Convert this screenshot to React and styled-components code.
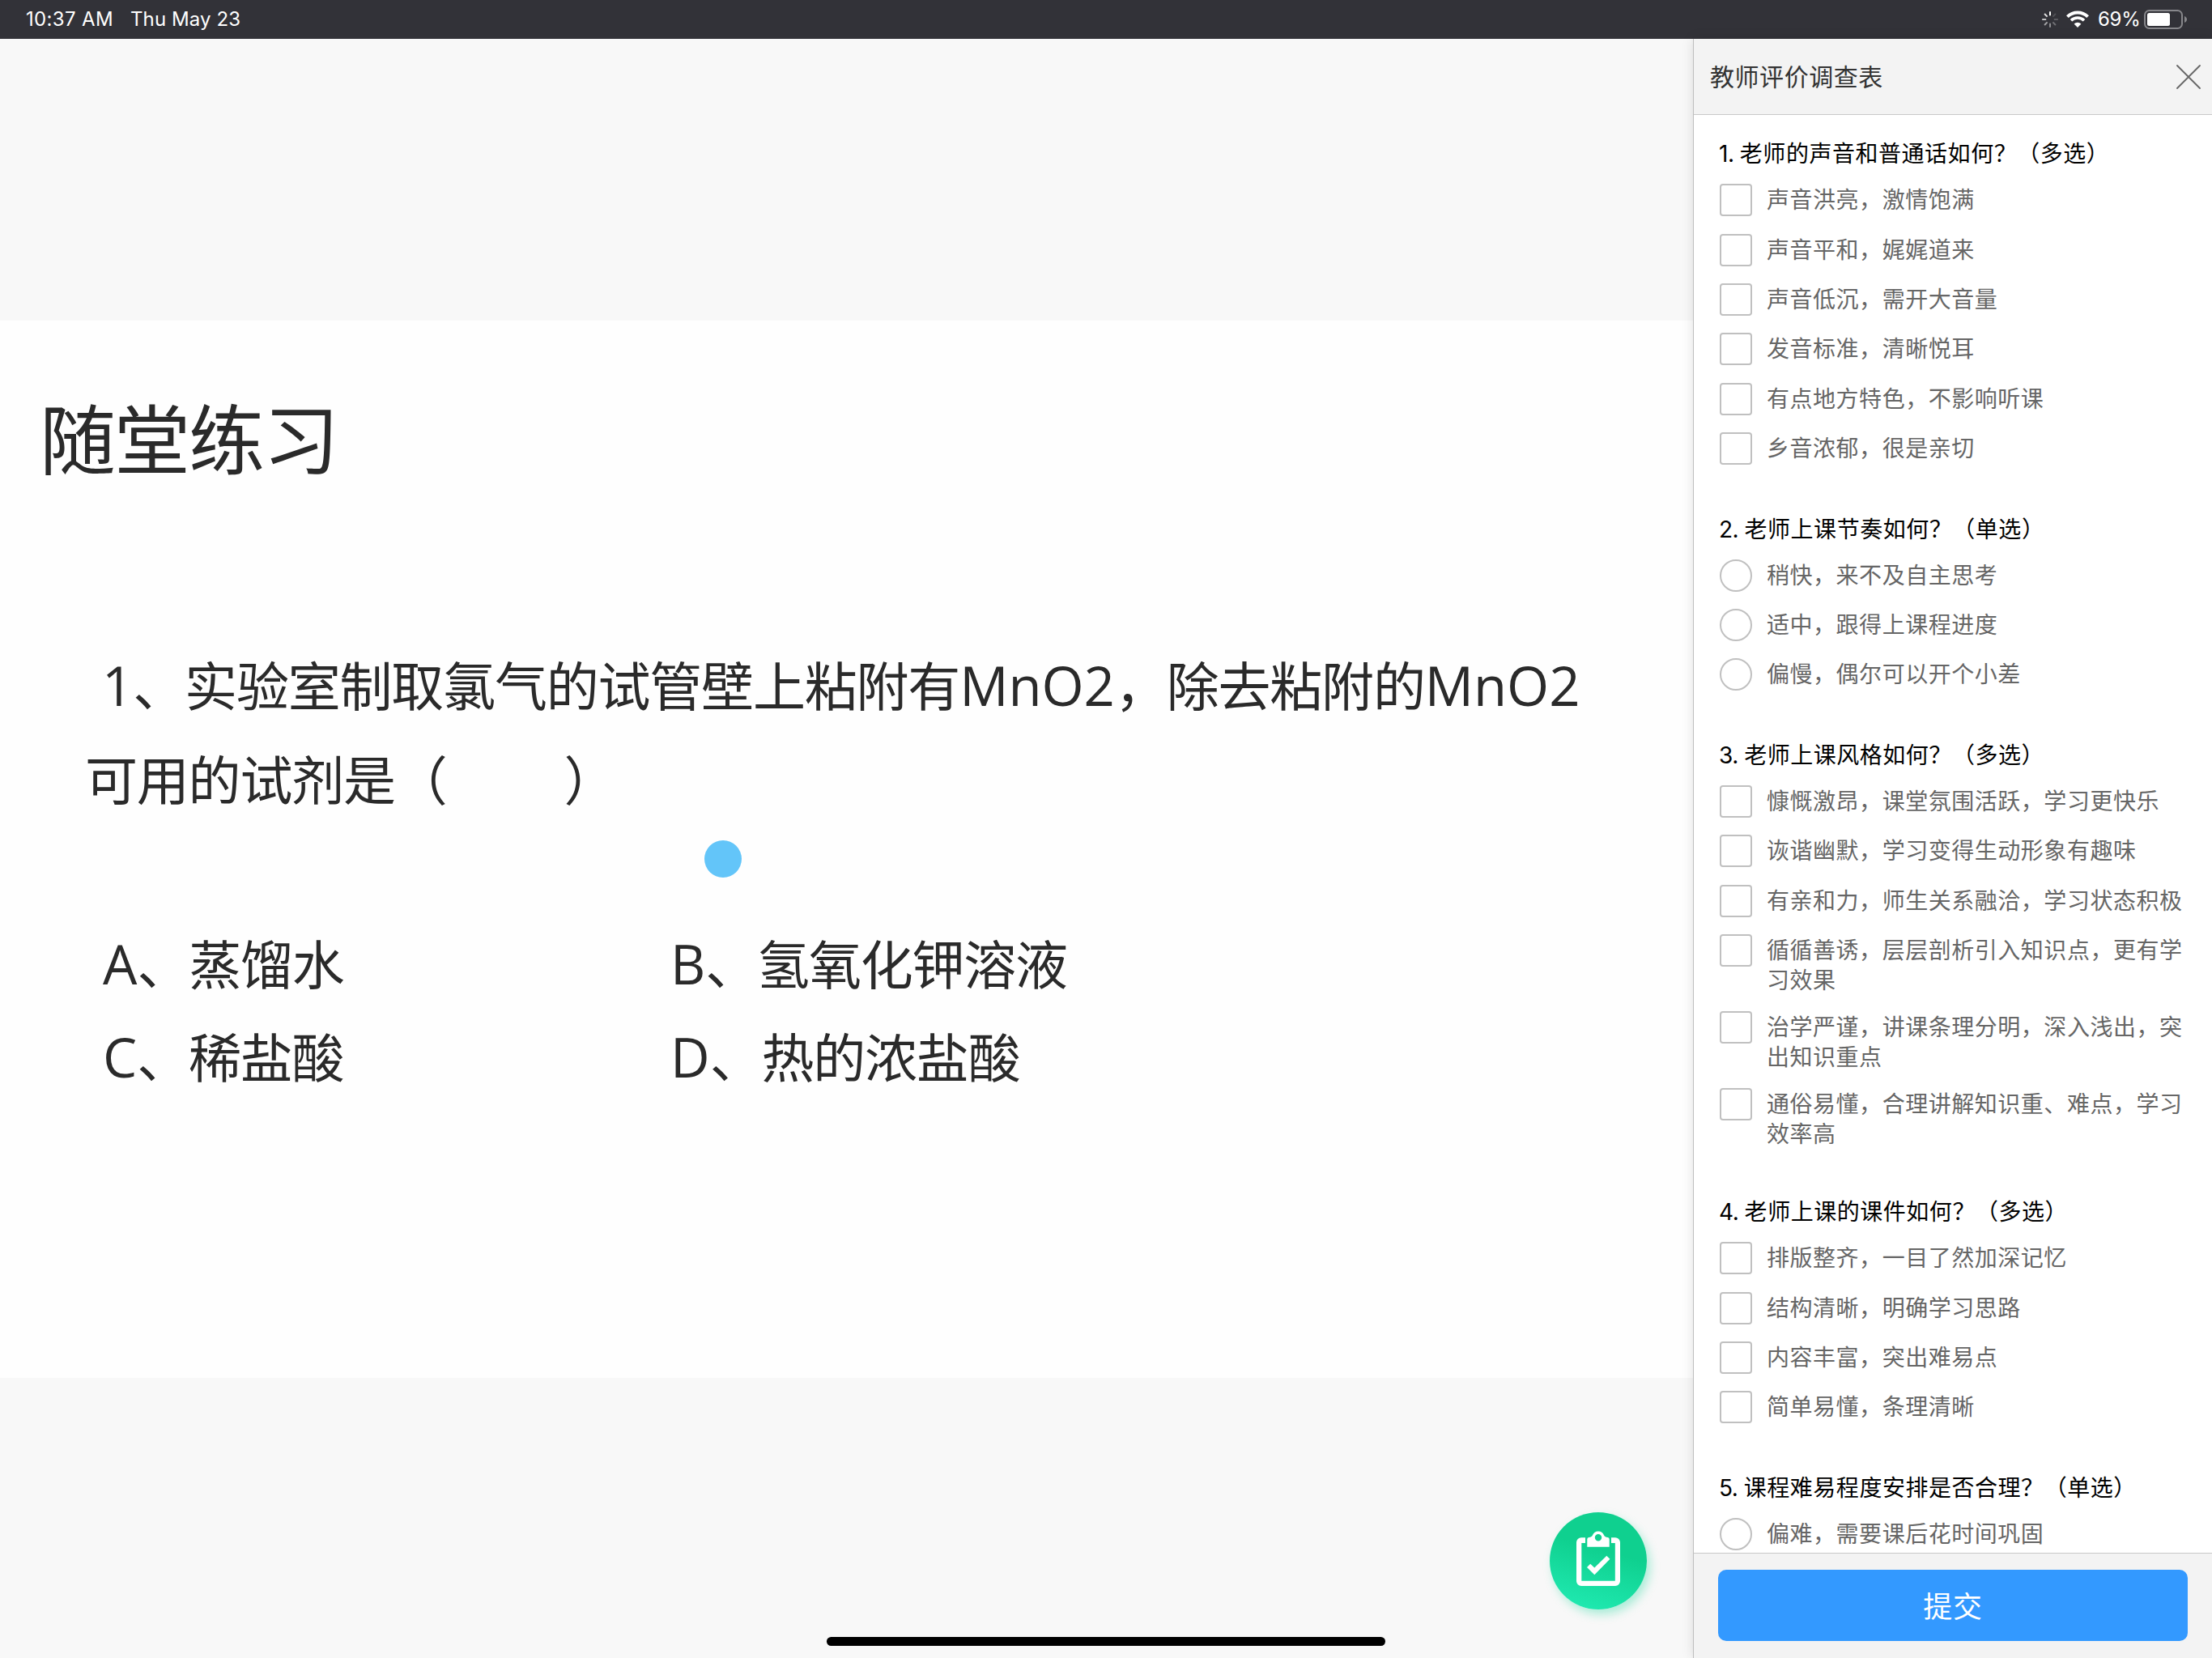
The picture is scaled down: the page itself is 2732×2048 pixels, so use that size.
import React, { useState } from 'react'
import styled, { createGlobalStyle } from 'styled-components';


const GlobalStyle = createGlobalStyle`
    html, body, #root {
        height: 100%;
        margin: 0;
    }
    body {
        overflow: hidden;
        font-family: 'Inter', 'Noto Sans CJK SC', sans-serif;
        text-spacing-trim: space-all;
    }
    * {
        box-sizing: border-box;
    }
`;

const questions = [
    {
        title: '老师的声音和普通话如何？（多选）',
        multiple: true,
        answers: ['声音洪亮，激情饱满', '声音平和，娓娓道来', '声音低沉，需开大音量', '发音标准，清晰悦耳', '有点地方特色，不影响听课', '乡音浓郁，很是亲切'],
    },
    {
        title: '老师上课节奏如何？（单选）',
        multiple: false,
        answers: ['稍快，来不及自主思考', '适中，跟得上课程进度', '偏慢，偶尔可以开个小差'],
    },
    {
        title: '老师上课风格如何？（多选）',
        multiple: true,
        answers: [
            '慷慨激昂，课堂氛围活跃，学习更快乐',
            '诙谐幽默，学习变得生动形象有趣味',
            '有亲和力，师生关系融洽，学习状态积极',
            '循循善诱，层层剖析引入知识点，更有学习效果',
            '治学严谨，讲课条理分明，深入浅出，突出知识重点',
            '通俗易懂，合理讲解知识重、难点，学习效率高',
        ],
    },
    {
        title: '老师上课的课件如何？（多选）',
        multiple: true,
        answers: ['排版整齐，一目了然加深记忆', '结构清晰，明确学习思路', '内容丰富，突出难易点', '简单易懂，条理清晰'],
    },
    {
        title: '课程难易程度安排是否合理？（单选）',
        multiple: false,
        answers: ['偏难，需要课后花时间巩固'],
    },
];

const choices = [
    { letter: 'A', text: '蒸馏水' },
    { letter: 'B', text: '氢氧化钾溶液' },
    { letter: 'C', text: '稀盐酸' },
    { letter: 'D', text: '热的浓盐酸' },
];

const Screen = styled.div`
    position: relative;
    display: flex;
    flex-direction: column;
    width: 2732px;
    height: 2048px;
    overflow: hidden;
`

const StatusBar = styled.header`
    flex: 0 0 48px;
    display: flex;
    align-items: center;
    padding: 0 30px 0 32px;
    background: #323238;
    color: #fff;
    font-size: 24px;
    line-height: 48px;
    letter-spacing: 0.1px;
`

const StatusText = styled.span`
    &:first-child{
        margin-right: 21px;
        letter-spacing: 0.35px;
    }
`

const StatusIcons = styled.div`
    display: flex;
    align-items: center;
    margin-left: auto;
`

const Percent = styled.span`
    width: 68px;
    padding-left: 11px;
    letter-spacing: -0.3px;
`

const Main = styled.main`
    flex: 1;
    display: flex;
    min-height: 0;
`

const Stage = styled.section`
    position: relative;
    flex: 1;
    display: flex;
    flex-direction: column;
    justify-content: center;
    background: #f8f8f8;
    padding-top: 2px;
`

const Slide = styled.article`
    position: relative;
    height: 1306px;
    padding: 75px 60px 0 105px;
    background: #fefefe;
    color: #2a2a2a;
    font-family: 'Noto Sans CJK SC', sans-serif;
    font-size: 65px;
    letter-spacing: -1.2px;
`

const SlideTitle = styled.h1`
    margin: 0 0 181px -56px;
    font-size: 94px;
    line-height: 134px;
    font-weight: 400;
    letter-spacing: -2px;
`

const Problem = styled.p`
    margin: 0;
    line-height: 116px;
    white-space: nowrap;
`

const Latin = styled.span`
    font-family: 'Open Sans', sans-serif;
    font-size: 67px;
    line-height: 0;
    letter-spacing: 0;
`

const Indent = styled.span`
    display: inline-block;
    width: 21px;
`

const Blank = styled.span`
    display: inline-block;
    width: 145px;
`

const Choices = styled.div`
    display: grid;
    grid-template-columns: 701px 1fr;
    margin-top: 113px;
    padding-left: 22px;
    line-height: 115px;
`

const Pointer = styled.div`
    position: absolute;
    left: 870px;
    top: 642px;
    width: 46px;
    height: 46px;
    border-radius: 50%;
    background: #63c5f9;
`

const SurveyButton = styled.button`
    position: absolute;
    right: 57px;
    bottom: 60px;
    width: 120px;
    height: 120px;
    padding: 0;
    border: 0;
    border-radius: 50%;
    background: linear-gradient(196deg, #0fd08f 40%, #1fe9b0 92%);
    box-shadow: 4px 6px 12px rgba(25, 215, 155, 0.35);
`

const Panel = styled.aside`
    position: relative;
    flex: 0 0 641px;
    display: flex;
    flex-direction: column;
    border-left: 1px solid #bebebe;
    background: #fff;
    box-shadow: 0 0 14px rgba(0, 0, 0, 0.12);
`

const PanelHeader = styled.div`
    flex: 0 0 94px;
    display: flex;
    align-items: center;
    justify-content: space-between;
    padding: 0 14px 0 20px;
    border-bottom: 1px solid #c8c8c8;
    background: #f3f3f3;
`

const PanelTitle = styled.span`
    padding-bottom: 3px;
    color: #333;
    font-size: 30px;
    letter-spacing: 0.55px;
`

const CloseButton = styled.button`
    display: flex;
    padding: 0;
    border: 0;
    background: none;
`

const PanelBody = styled.div`
    flex: 1;
    min-height: 0;
    overflow: hidden;
    padding: 27.4px 20px 0 32px;
    font-size: 28px;
    letter-spacing: 0.53px;
`

const Question = styled.section`
    margin-bottom: 57.3px;
`

const QuestionTitle = styled.h2`
    margin: 0 0 16px -1px;
    font-size: inherit;
    font-weight: 400;
    line-height: 42px;
    color: #000;
    white-space: nowrap;
`

const QuestionNumber = styled.span`
    letter-spacing: -0.5px;
`

const Answer = styled.label`
    display: flex;
    align-items: flex-start;
    min-height: 41.35px;
    margin-bottom: 20px;
    color: #666;
`

const Mark = styled.span`
    flex: 0 0 40px;
    height: 40px;
    margin-right: 18px;
    border: 2px solid ${({ $checked }) => $checked ? '#3399ff' : '#c0c0c0'};
    border-radius: ${({ $round }) => $round ? '50%' : '4px'};
    background: ${({ $checked }) => $checked ? '#3399ff' : '#fff'};
`

const AnswerText = styled.span`
    line-height: 37px;
    padding-top: 2px;
    margin-bottom: -1px;
`

const PanelFooter = styled.div`
    flex: 0 0 130px;
    padding: 20px 30px;
    border-top: 1px solid #c8c8c8;
    background: #f3f3f3;
`

const Submit = styled.button`
    width: 580px;
    height: 88px;
    padding: 0 0 3px;
    border: 0;
    border-radius: 10px;
    background: #3399ff;
    color: #fff;
    font-family: inherit;
    font-size: 36px;
    letter-spacing: 0.8px;
`

const HomeIndicator = styled.div`
    position: absolute;
    left: 1021px;
    bottom: 15px;
    width: 690px;
    height: 11px;
    border-radius: 6px;
    background: #000;
`

const Spinner = () => (
    <svg width="22" height="22" viewBox="-11 -11 22 22">
        {[1, 0.15, 0.2, 0.3, 0.45, 0.55, 0.7, 0.85].map((opacity, i) => (
            <path key={i} d="M0 -4.8V-9.8" transform={`rotate(${i * 45})`} stroke="#fff" strokeWidth="2" opacity={opacity} />
        ))}
    </svg>
)

const WifiIcon = styled.svg`
    margin-left: 9px;
`

const Wifi = () => (
    <WifiIcon width="28" height="22" viewBox="0 0 28 22" fill="none" stroke="#fff">
        <path d="M1.4 7.6A18 18 0 0 1 26.6 7.6" strokeWidth="4" />
        <path d="M6 12.2A11.5 11.5 0 0 1 22 12.2" strokeWidth="3.6" />
        <path d="M14 21L9.6 16.6A6.3 6.3 0 0 1 18.4 16.6Z" fill="#fff" stroke="none" />
    </WifiIcon>
)

const Battery = () => (
    <svg width="54" height="24" viewBox="0 0 54 24">
        <rect x="1" y="1" width="46" height="22" rx="5.5" fill="none" stroke="#87878b" strokeWidth="2" />
        <rect x="4" y="4" width="28" height="16" rx="2.5" fill="#fff" />
        <path d="M50 8C54 9.5 54 14.5 50 16Z" fill="#87878b" />
    </svg>
)

const Clipboard = () => (
    <svg width="120" height="120" viewBox="0 0 120 120" fill="#fff">
        <path d="M44 31.3H39a6 6 0 0 0-6 6V85a6 6 0 0 0 6 6H81a6 6 0 0 0 6-6V37.3a6 6 0 0 0-6-6H76V38H80.8V84.8H39.3V38H44Z" />
        <path fillRule="evenodd" d="M46.3 33.2Q46.3 31.2 48.3 30.9Q52.3 30.6 53 28.2A7.5 7.5 0 0 1 67 28.2Q67.7 30.6 71.7 30.9Q73.7 31.2 73.7 33.2V42.7H46.3ZM60 27a4.2 4.2 0 1 0 0 8.4a4.2 4.2 0 1 0 0-8.4Z" />
        <path d="M46 68L50.2 63.7L55.3 68.4L70.3 53.7L74.4 57.8L55.3 77.3Z" />
    </svg>
)

function App() {
    const [selected, setSelected] = useState({})

    const toggleAnswer = (question, index) => {
        const current = selected[question.title] || []
        const isOn = current.includes(index)
        let next = isOn ? current.filter(i => i !== index) : [...current, index]
        if (!question.multiple) {
            next = [index]
        }
        setSelected({ ...selected, [question.title]: next })
    }

    return (
        <>
            <GlobalStyle />
            <Screen lang="zh-CN">
                <StatusBar>
                    <StatusText>10:37 AM</StatusText>
                    <StatusText>Thu May 23</StatusText>
                    <StatusIcons>
                        <Spinner />
                        <Wifi />
                        <Percent>69%</Percent>
                        <Battery />
                    </StatusIcons>
                </StatusBar>
                <Main>
                    <Stage>
                        <Slide>
                            <SlideTitle>随堂练习</SlideTitle>
                            <Problem>
                                <Indent /><Latin>1</Latin>、实验室制取氯气的试管壁上粘附有<Latin>MnO2</Latin>，除去粘附的<Latin>MnO2</Latin>
                                <br />
                                可用的试剂是（<Blank />）
                            </Problem>
                            <Choices>
                                {choices.map(({ letter, text }) => (
                                    <div key={letter}><Latin>{letter}</Latin>、{text}</div>
                                ))}
                            </Choices>
                            <Pointer />
                        </Slide>
                        <SurveyButton><Clipboard /></SurveyButton>
                    </Stage>
                    <Panel>
                        <PanelHeader>
                            <PanelTitle>教师评价调查表</PanelTitle>
                            <CloseButton>
                                <svg width="30" height="30" viewBox="0 0 30 30" stroke="#666" strokeWidth="1.8" strokeLinecap="round">
                                    <path d="M1 1L29 29M29 1L1 29" />
                                </svg>
                            </CloseButton>
                        </PanelHeader>
                        <PanelBody>
                            {questions.map((question, n) => (
                                <Question key={question.title}>
                                    <QuestionTitle><QuestionNumber>{n + 1}. </QuestionNumber>{question.title}</QuestionTitle>
                                    {question.answers.map((answer, i) => (
                                        <Answer key={answer} onClick={() => toggleAnswer(question, i)}>
                                            <Mark $round={!question.multiple} $checked={(selected[question.title] || []).includes(i)} />
                                            <AnswerText>{answer}</AnswerText>
                                        </Answer>
                                    ))}
                                </Question>
                            ))}
                        </PanelBody>
                        <PanelFooter>
                            <Submit>提交</Submit>
                        </PanelFooter>
                    </Panel>
                </Main>
                <HomeIndicator />
            </Screen>
        </>
    )
}

export default App;
